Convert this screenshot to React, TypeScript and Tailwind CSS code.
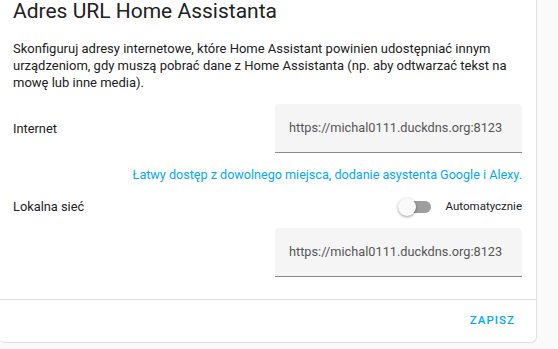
import { useState } from 'react'

const font = { fontFamily: 'Roboto, "Noto Sans", sans-serif' }

function UrlField({ value }: { value: string }) {
  return (
    <div className="w-[247px] h-[49px] bg-[#f5f5f5] rounded-t-[4px] border-b border-[#8a8a8a] flex items-center px-[14px]">
      <span className="text-[12.75px] text-[#555] whitespace-nowrap">{value}</span>
    </div>
  )
}

function Toggle({ on }: { on: boolean }) {
  return (
    <div className="relative w-[36px] h-[20px] flex items-center">
      <div className={`ml-[3px] w-[30px] h-[12px] rounded-full ${on ? 'bg-[#81d4fa]' : 'bg-[#9e9e9e]'}`} />
      <div className="absolute left-0 top-[1px] w-[18px] h-[18px] rounded-full bg-[#fafafa] shadow-[0_1px_3px_rgba(0,0,0,0.4)]" />
    </div>
  )
}

export default function App() {
  const [auto] = useState(false)
  const url = 'https://michal0111.duckdns.org:8123'

  return (
    <div className="w-[558px] h-[349px] bg-[#fafafa] overflow-hidden" style={font}>
      <div className="w-[538px] -ml-px h-[343px] bg-white rounded-b-[6px] border-r border-b border-[#e0e0e0] flex flex-col">
        <div className="px-[14px] text-[#212121]">
          <h1 className="text-[21px] leading-[22px] font-normal">Adres URL Home Assistanta</h1>
          <p className="mt-[18px] text-[13px] leading-[17px]">
            Skonfiguruj adresy internetowe, które Home Assistant powinien udostępniać innym
            urządzeniom, gdy muszą pobrać dane z Home Assistanta (np. aby odtwarzać tekst na
            mowę lub inne media).
          </p>

          <div className="mt-[13px] flex items-center justify-between">
            <span className="text-[12.8px]">Internet</span>
            <UrlField value={url} />
          </div>

          <p className="mt-[13px] text-right text-[12.6px] leading-[18px] text-[#03a9f4]">
            Łatwy dostęp z dowolnego miejsca, dodanie asystenta Google i Alexy.
          </p>

          <div className="mt-[13px] flex items-center justify-between">
            <span className="text-[12.8px]">Lokalna sieć</span>
            <div className="flex items-center gap-[12px]">
              <Toggle on={auto} />
              <span className="text-[11.5px]">Automatycznie</span>
            </div>
          </div>

          <div className="mt-[11px] flex justify-end">
            <UrlField value={url} />
          </div>
        </div>

        <div className="mt-[22px] border-t border-[#e0e0e0] flex justify-end px-[21px] pt-[12px]">
          <button className="text-[11.5px] font-medium tracking-[1px] text-[#03a9f4]">ZAPISZ</button>
        </div>
      </div>
    </div>
  )
}
